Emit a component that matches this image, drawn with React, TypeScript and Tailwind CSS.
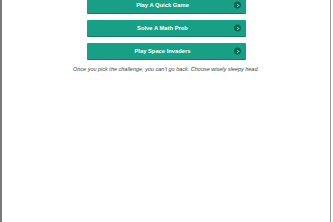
import React from 'react';

const choices = ['Play A Quick Game', 'Solve A Math Prob', 'Play Space Invaders'];

function ChevronDot() {
  return (
    <span className="absolute right-[5px] top-1/2 -translate-y-1/2 flex h-[7px] w-[7px] items-center justify-center rounded-full bg-[#0c6655]">
      <svg width="4" height="4" viewBox="0 0 8 8">
        <path d="M3 1.5 L5.5 4 L3 6.5" fill="none" stroke="#fff" strokeWidth="1.8" />
      </svg>
    </span>
  );
}

export default function App() {
  return (
    <div
      className="h-[222px] w-[331px] overflow-hidden border-l-2 border-r border-l-[#7a7a7a] border-r-[#9a9a9a] bg-white"
      style={{ fontFamily: '"Liberation Sans", Arial, sans-serif' }}
    >
      <div className="-mt-[3px] flex flex-col items-center gap-[7px] pl-[1px]">
        {choices.map(label => (
          <button
            key={label}
            className="relative flex h-[16px] w-[159px] items-center justify-center rounded-[1px] bg-[#17a086] pr-[8px] text-[5.8px] font-bold text-white shadow-[0_1px_0_#0f7d68]"
          >
            {label}
            <ChevronDot />
          </button>
        ))}
      </div>
      <p className="mt-[6px] text-center text-[5.5px] italic text-[#444]">
        Once you pick the challenge, you can't go back. Choose wisely sleepy head.
      </p>
    </div>
  );
}
